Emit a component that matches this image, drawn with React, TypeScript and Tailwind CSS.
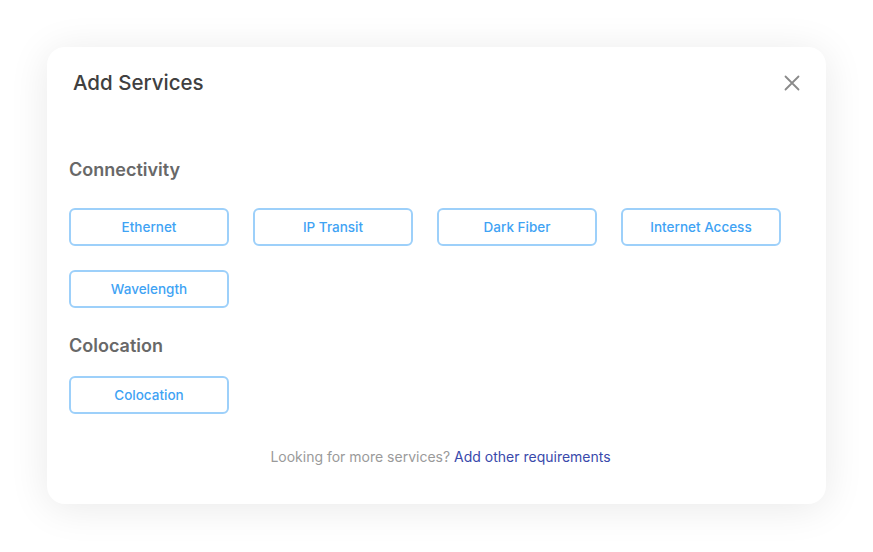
import React from 'react';

const CONNECTIVITY = ['Ethernet', 'IP Transit', 'Dark Fiber', 'Internet Access', 'Wavelength'];
const COLOCATION = ['Colocation'];

const ServiceButton: React.FC<{ label: string }> = ({ label }) => (
  <button className="w-[160px] h-[38px] rounded-[6px] border-2 border-[#9dd0fa] bg-white text-[13.5px] font-medium text-[#3fa3f4] flex items-center justify-center">
    {label}
  </button>
);

const App: React.FC = () => {
  return (
    <div
      className="w-[873px] h-[552px] bg-white pt-[47px] pl-[47px]"
      style={{ fontFamily: 'Inter, "Noto Sans", sans-serif' }}
    >
      <div className="w-[779px] h-[457px] bg-white rounded-[18px] shadow-[0_4px_40px_rgba(0,0,0,0.09)] px-[22px] pt-[22px] flex flex-col">
        {/* Header */}
        <div className="h-[28px] flex items-center justify-between pl-[4px] pr-[3px]">
          <h2 className="text-[20.5px] font-medium text-[#404040]">Add Services</h2>
          <button className="text-[#8a8a8a] mr-[1px]">
            <svg width="16" height="16" viewBox="0 0 16 16" fill="none" stroke="currentColor" strokeWidth="1.8" strokeLinecap="round">
              <path d="M1.5 1.5L14.5 14.5M14.5 1.5L1.5 14.5" />
            </svg>
          </button>
        </div>

        {/* Connectivity */}
        <h3 className="mt-[61px] h-[24px] leading-[24px] text-[18px] font-semibold text-[#686868]">Connectivity</h3>
        <div className="mt-[26px] grid grid-cols-[repeat(4,160px)] gap-[24px]">
          {CONNECTIVITY.map((s) => (
            <ServiceButton key={s} label={s} />
          ))}
        </div>

        {/* Colocation */}
        <h3 className="mt-[26px] h-[24px] leading-[24px] text-[18px] font-semibold text-[#686868]">Colocation</h3>
        <div className="mt-[18px] grid grid-cols-[repeat(4,160px)] gap-[24px]">
          {COLOCATION.map((s) => (
            <ServiceButton key={s} label={s} />
          ))}
        </div>

        {/* Footer */}
        <p className="mt-[33px] h-[20px] leading-[20px] text-center text-[14px] text-[#9a9a9a] pl-[8px]">
          Looking for more services?{' '}
          <a href="#" className="text-[#3949ab]">Add other requirements</a>
        </p>
      </div>
    </div>
  );
};

export default App;
